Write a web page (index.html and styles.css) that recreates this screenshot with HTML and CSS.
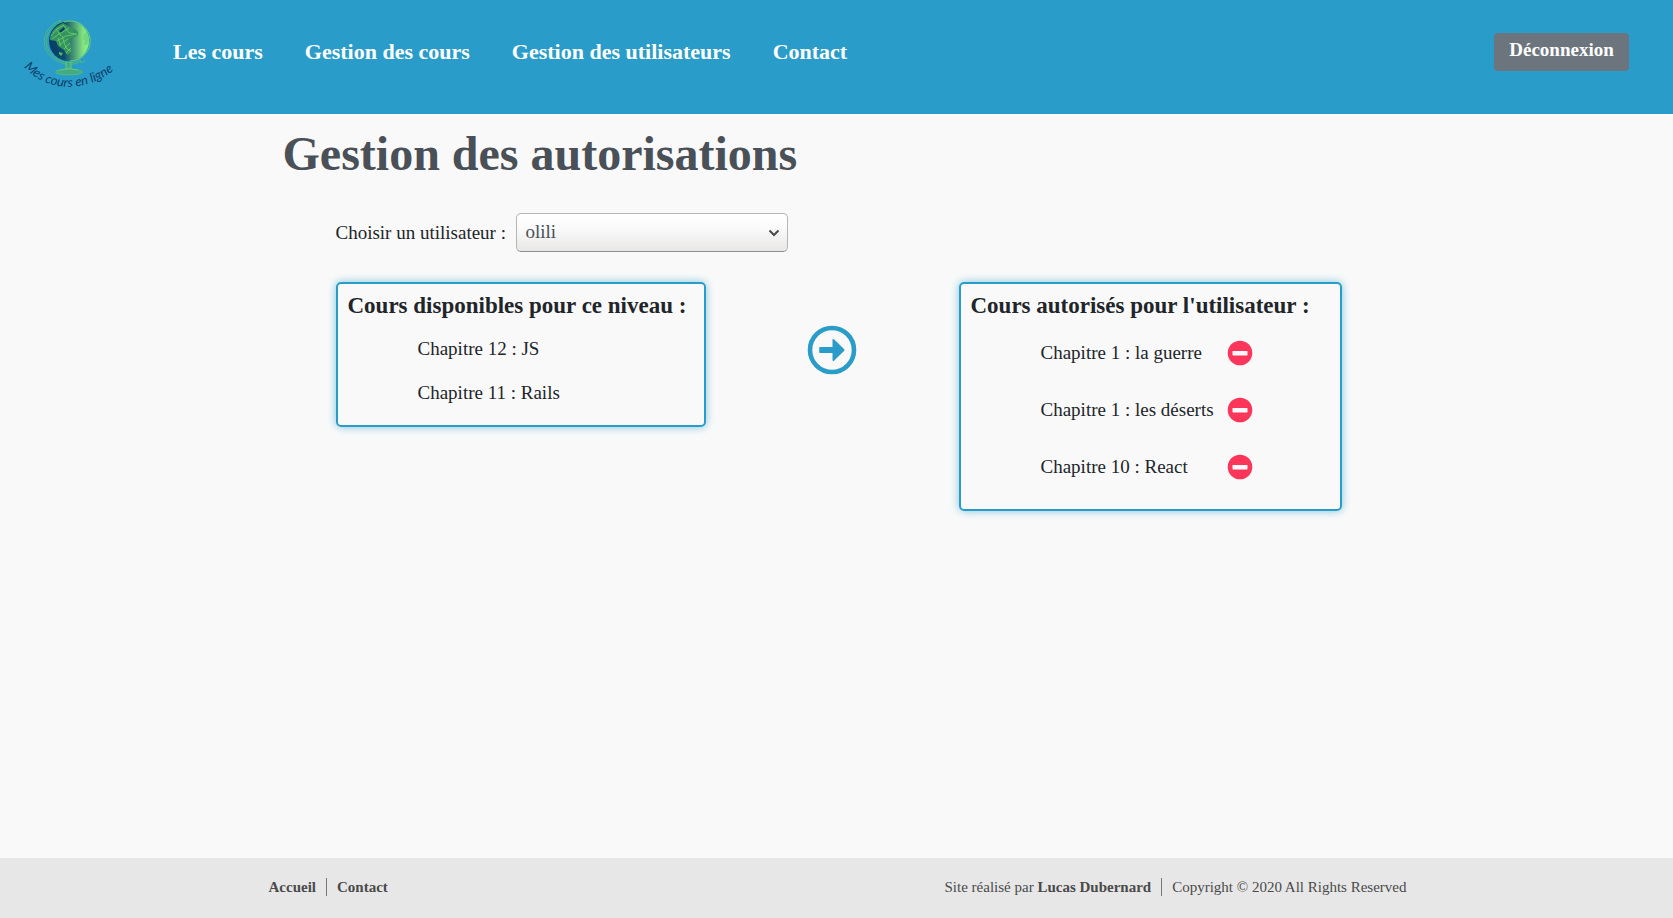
FILE: index.html
```html
<!DOCTYPE html>
<html lang="fr">
<head>
<meta charset="utf-8">
<title>Gestion des autorisations</title>
<meta name="viewport" content="width=device-width, initial-scale=1">
<link rel="stylesheet" href="styles.css">
</head>
<body>
<header class="header">
  <a class="logo" href="#" aria-label="Mes cours en ligne">
    <svg width="114" height="114" viewBox="0 0 114 114">
      <defs>
        <linearGradient id="sea">
          <stop offset="0" stop-color="#053c66"/>
          <stop offset=".38" stop-color="#0b4b6c"/>
          <stop offset=".85" stop-color="#83e27f"/>
          <stop offset="1" stop-color="#8df07e"/>
        </linearGradient>
        <path id="arc" d="M12 67C35 93 77 95 109 64"/>
      </defs>
      <g transform="translate(-8 0)">
        <g fill="none" stroke="#4cba7c" stroke-width="1">
          <path d="M58 20C41 25 36 42 44 53C53 65 68 67 77 61M58 22C43 27 38 42 46 52C54 63 68 65 76 60"/>
          <path d="M55 21l3 2l4-2M76 60l1 3l4-2"/>
        </g>
        <circle cx="65" cy="41" r="20" fill="url(#sea)"/>
        <path fill="none" stroke="#69cf76" d="M60 22A20 20 0 1 1 66 61"/>
        <path fill="#35935f" d="M46 38C47 31 52 26 59 23L64 26L68 28C73 29 76 33 73 36L68 38L65 40L67 44L67 53L63 55L60 50L54 46L52 41L46 40Z"/>
        <path fill="#72d879" d="M82 32l-2 3l-1 4l2 2l-1 3l3 1l2-4l-1-7z"/>
        <path fill="#4fbd61" d="M55 52l4 1l-2 3l-2-2z"/>
        <path fill="#063f63" d="M55 31l5-4l1 2l-4 4z"/>
        <path fill="none" stroke="#6cce6d" stroke-width=".8" d="M47 36l6-7l7-4M48 39l7-5l10-6M53 41l9-5l11-2M55 45l9-6M60 49l6-6M62 53l5-5M52 29l5 7M60 26l5 7l7 1M58 36l4 12l5 3M54 38l3 8"/>
        <path fill="#43ae86" d="M62 63h5v6h-5z"/>
        <ellipse cx="65" cy="72" rx="13.500" ry="2.800" fill="#42aa85" stroke="#55bd78"/>
        <path fill="none" stroke="#65c977" d="M56 70q9-3 18 0M62 62v7M67 62v7"/>
      </g>
      <text class="logo-text"><textPath href="#arc">Mes cours en ligne</textPath></text>
    </svg>
  </a>
  <nav class="nav">
    <a href="#">Les cours</a>
    <a href="#">Gestion des cours</a>
    <a href="#">Gestion des utilisateurs</a>
    <a href="#">Contact</a>
  </nav>
  <button class="logout" type="button">Déconnexion</button>
</header>

<main class="main">
  <h1 class="title">Gestion des autorisations</h1>
  <div class="content">
    <div class="picker">
      <label class="picker-label" for="user">Choisir un utilisateur :</label>
      <div class="select-wrap">
        <select class="select" id="user"><option>olili</option></select>
        <svg class="chevron" width="12" height="8" viewBox="0 0 12 8"><path d="M1.500 1.500L6 6L10.500 1.500" fill="none" stroke="#4a4a4a" stroke-width="2"/></svg>
      </div>
    </div>
    <div class="panels">
      <section class="panel available">
        <h2 class="panel-title">Cours disponibles pour ce niveau :</h2>
        <ul class="list">
          <li>Chapitre 12 : JS</li>
          <li>Chapitre 11 : Rails</li>
        </ul>
      </section>
      <button class="icon-btn transfer" type="button" aria-label="Autoriser">
        <svg width="50" height="50" viewBox="0 0 50 50"><circle cx="25" cy="25" r="22" fill="none" stroke="#2a9cc9" stroke-width="4.600"/><path d="M13 22h12.500v-7q0-1.500 1.500-.8L37 24q1 1 0 2L27 35.800q-1.500.7-1.500-.8v-7H13q-.8 0-.8-.8v-4.400q0-.8.8-.8z" fill="#2a9cc9"/></svg>
      </button>
      <section class="panel allowed">
        <h2 class="panel-title">Cours autorisés pour l'utilisateur :</h2>
        <ul class="allowed-list">
          <li><span>Chapitre 1 : la guerre</span><button class="icon-btn" type="button" aria-label="Retirer la guerre"><svg width="26" height="26" viewBox="0 0 26 26"><circle cx="13" cy="13" r="12.300" fill="#fc365a"/><rect x="5.500" y="11" width="15" height="4.400" rx=".6" fill="#f9f9f9"/></svg></button></li>
          <li><span>Chapitre 1 : les déserts</span><button class="icon-btn" type="button" aria-label="Retirer les déserts"><svg width="26" height="26" viewBox="0 0 26 26"><circle cx="13" cy="13" r="12.300" fill="#fc365a"/><rect x="5.500" y="11" width="15" height="4.400" rx=".6" fill="#f9f9f9"/></svg></button></li>
          <li><span>Chapitre 10 : React</span><button class="icon-btn" type="button" aria-label="Retirer React"><svg width="26" height="26" viewBox="0 0 26 26"><circle cx="13" cy="13" r="12.300" fill="#fc365a"/><rect x="5.500" y="11" width="15" height="4.400" rx=".6" fill="#f9f9f9"/></svg></button></li>
        </ul>
      </section>
    </div>
  </div>
</main>

<footer class="footer">
  <div class="footer-inner">
    <div class="footer-group"><a href="#">Accueil</a><a href="#">Contact</a></div>
    <div class="footer-group"><span>Site réalisé par <a href="#">Lucas Dubernard</a></span><span>Copyright © 2020 All Rights Reserved</span></div>
  </div>
</footer>
</body>
</html>
```

FILE: styles.css
```css
* { box-sizing: border-box; }

body {
  margin: 0;
  min-height: 100vh;
  display: flex;
  flex-direction: column;
  background: #f9f9f9;
  color: #212529;
  font-family: "Liberation Serif", "Times New Roman", serif;
  font-size: 19px;
  line-height: 28px;
}

a { color: inherit; text-decoration: none; }
ul { list-style: none; margin: 0; padding: 0; }
button, select { font: inherit; }

.header {
  display: flex;
  align-items: center;
  min-height: 114px;
  padding: 0 44px 0 12px;
  background: #2a9cc9;
}

.logo svg { display: block; }

.logo-text {
  fill: #073f69;
  font: italic 400 13px Lato, sans-serif;
}

.nav {
  display: flex;
  gap: 42px;
  margin: 0 auto 10px 47px;
  color: #fff;
  font-size: 22px;
  font-weight: 700;
}

.logout {
  min-width: 135px;
  height: 38px;
  margin-bottom: 10px;
  padding: 0 12px 4px;
  border: 0;
  border-radius: 4px;
  background: #6c757d;
  color: #fff;
  font-size: 19px;
  font-weight: 700;
}

.main {
  flex: 1;
  width: 100%;
  max-width: 1140px;
  margin: 0 auto;
  padding: 0 16px;
}

.title {
  margin: 9px 0 28px;
  color: #495057;
  font-size: 48px;
  line-height: 62px;
}

.content { padding: 0 49px 0 53px; }

.picker {
  display: flex;
  align-items: center;
}

.picker-label { min-width: 180px; }
.select-wrap { position: relative; width: 272px; }

.select {
  appearance: none;
  display: block;
  width: 100%;
  height: 39px;
  padding: 0 28px 2px 9px;
  border: 1px solid #b5b5b5;
  border-bottom-color: #8e8e8e;
  border-radius: 5px;
  background: linear-gradient(#fff, #fafafa 40%, #e8e7e6);
  color: #495057;
}

.chevron {
  position: absolute;
  right: 8px;
  top: 16px;
  pointer-events: none;
}

.panels {
  display: flex;
  justify-content: space-between;
  align-items: flex-start;
  margin-top: 30px;
}

.panel {
  padding: 6px 10px;
  border: 2px solid #2a9cc9;
  border-radius: 5px;
  box-shadow: 0 0 9px #7cc3de;
}

.available { width: 370px; padding-bottom: 18px; }
.allowed { width: 383px; padding-bottom: 14px; }

.panel-title {
  margin: 0;
  font-size: 23px;
  line-height: 32px;
}

.list { padding: 13px 0 0 70px; }
.list li + li { margin-top: 16px; }

.icon-btn {
  padding: 0;
  border: 0;
  background: none;
}

.icon-btn svg { display: block; }
.transfer { margin-top: 43px; }

.allowed-list { width: 282px; padding: 2px 0 0 70px; }

.allowed-list li {
  display: flex;
  align-items: center;
  justify-content: space-between;
  height: 57px;
}

.footer {
  background: #e7e7e7;
  color: #4a4a4a;
  font-size: 15px;
  line-height: 18px;
}

.footer-inner {
  display: flex;
  justify-content: space-between;
  max-width: 1140px;
  margin: 0 auto;
  padding: 20px 0 22px 2px;
}

.footer-group { display: flex; }
.footer a { font-weight: 700; }

.footer-group > * + * {
  margin-left: 10px;
  padding-left: 10px;
  border-left: 1px solid #777;
}
```
